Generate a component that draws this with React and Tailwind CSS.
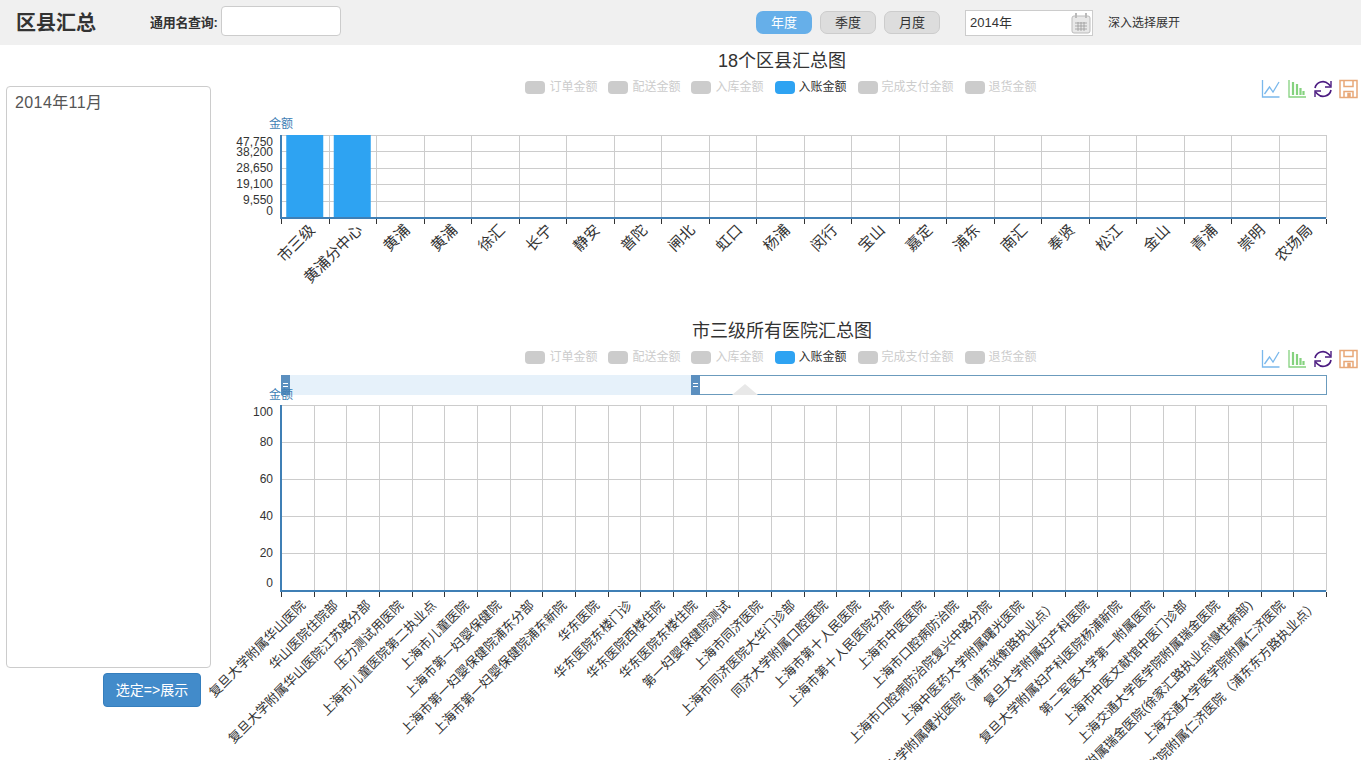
const FONT = '"Liberation Sans", "Noto Sans CJK SC", sans-serif';

const LEGEND = ["订单金额", "配送金额", "入库金额", "入账金额", "完成支付金额", "退货金额"];

const DISTRICTS = [
  "市三级", "黄浦分中心", "黄浦", "黄浦", "徐汇", "长宁", "静安", "普陀", "闸北", "虹口", "杨浦",
  "闵行", "宝山", "嘉定", "浦东", "南汇", "奉贤", "松江", "金山", "青浦", "崇明", "农场局",
];

const HOSPITALS = [
  "复旦大学附属华山医院", "华山医院住院部", "复旦大学附属华山医院江苏路分部", "压力测试用医院",
  "上海市儿童医院第二执业点", "上海市儿童医院", "上海市第一妇婴保健院", "上海市第一妇婴保健院浦东分部",
  "上海市第一妇婴保健院浦东新院", "华东医院", "华东医院东楼门诊", "华东医院西楼住院", "华东医院东楼住院",
  "第一妇婴保健院测试", "上海市同济医院", "上海市同济医院大华门诊部", "同济大学附属口腔医院",
  "上海市第十人民医院", "上海市第十人民医院分院", "上海市中医医院", "上海市口腔病防治院",
  "上海市口腔病防治院复兴中路分院", "上海中医药大学附属曙光医院", "上海中医药大学附属曙光医院（浦东张衡路执业点）",
  "复旦大学附属妇产科医院", "复旦大学附属妇产科医院杨浦新院", "第二军医大学第一附属医院",
  "上海市中医文献馆中医门诊部", "上海交通大学医学院附属瑞金医院", "上海交通大学医学院附属瑞金医院(徐家汇路执业点慢性病部)",
  "上海交通大学医学院附属仁济医院", "上海交通大学医学院附属仁济医院（浦东东方路执业点）",
];

// svg x origin sits at page x = 217
const X0 = 64;
const X1 = 1109;

function Legend() {
  return (
    <div className="flex justify-center gap-[11px] h-[14px]">
      {LEGEND.map((name) => {
        const on = name === "入账金额";
        return (
          <div key={name} className={`flex items-center gap-[4px] text-[12px] leading-[14px] ${on ? "text-[#333]" : "text-[#ccc]"}`}>
            <span className={`w-[20px] h-[13px] rounded-[4px] ${on ? "bg-[#2ea3f2]" : "bg-[#ccc]"}`} />
            {name}
          </div>
        );
      })}
    </div>
  );
}

function Toolbox() {
  return (
    <div className="absolute top-[-1px] right-[3px] flex gap-[6px]">
      <svg width="20" height="20" viewBox="0 0 20 20" fill="none" stroke="#7ab8ec" strokeWidth="1.3">
        <path d="M1.5 1v17h17" />
        <path d="M3.5 15l5-7 3.5 5 6-10" />
      </svg>
      <svg width="20" height="20" viewBox="0 0 20 20" fill="none" stroke="#85d27f" strokeWidth="1.3">
        <path d="M2 1v17h17" />
        <path d="M6 16V3M10 16V5M13.5 16V9M16.5 16v-4" strokeWidth="2.2" />
      </svg>
      <svg width="20" height="20" viewBox="0 0 20 20" fill="none" stroke="#4b1a80" strokeWidth="1.7">
        <path d="M2 9a8 8 0 0 1 13.5-4L17.5 7" />
        <path d="M18 11a8 8 0 0 1-13.5 4L2.5 13" />
        <path d="M18 2v6H12M2 18v-6H8" strokeWidth="1.4" />
      </svg>
      <svg width="19" height="20" viewBox="0 0 19 20" fill="none" stroke="#e8a878" strokeWidth="1.5">
        <path d="M1 1.5h17v17H1z" />
        <path d="M5 1.5v6h9v-6M5 18.5v-6h9v6" />
        <path d="M9 14.5h2v3H9z" fill="#e8a878" />
      </svg>
    </div>
  );
}

function Ticks({ count, y }) {
  const step = (X1 - X0) / count;
  return Array.from({ length: count + 1 }, (_, i) => (
    <line key={i} x1={Math.round(X0 + i * step) + 0.5} x2={Math.round(X0 + i * step) + 0.5} y1={y} y2={y + 5} stroke="#333" />
  ));
}

function Grid({ count, ys }) {
  const step = (X1 - X0) / count;
  const top = ys[0];
  const bottom = ys[ys.length - 1];
  return (
    <g stroke="#ccc">
      {ys.map((y) => (
        <line key={y} x1={X0} x2={X1} y1={y + 0.5} y2={y + 0.5} />
      ))}
      {Array.from({ length: count + 1 }, (_, i) => (
        <line key={i} x1={Math.round(X0 + i * step) + 0.5} x2={Math.round(X0 + i * step) + 0.5} y1={top} y2={bottom} />
      ))}
    </g>
  );
}

function Labels({ names, y, size, dx }) {
  const step = (X1 - X0) / names.length;
  return names.map((name, i) => {
    const x = X0 + step * (i + 0.5) + dx;
    return (
      <text key={i} x={x} y={y} fontSize={size} fill="#333" textAnchor="end" transform={`rotate(-45 ${x} ${y})`}>
        {name}
      </text>
    );
  });
}

function YLabels({ items }) {
  return items.map(([label, y]) => (
    <text key={label} x={56} y={y} fontSize="12" fill="#333" textAnchor="end" dominantBaseline="middle">
      {label}
    </text>
  ));
}

function DistrictChart() {
  const step = (X1 - X0) / DISTRICTS.length;
  return (
    <svg width="1144" height="200" style={{ fontFamily: FONT }} className="block mt-[6px] overflow-visible">
      <text x={64} y={28} fontSize="12" fill="#3f7fb5" textAnchor="middle">金额</text>
      <Grid count={22} ys={[35, 51, 68, 84, 101, 118]} />
      <rect x={X0 + step * 0.5 - 18.5} y="35" width="37" height="83" fill="#2ea3f2" />
      <rect x={X0 + step * 1.5 - 18.5} y="35" width="37" height="83" fill="#2ea3f2" />
      <line x1={X0} x2={X0} y1="35" y2="119" stroke="#3f7fb5" strokeWidth="2" />
      <line x1={X0 - 1} x2={X1} y1="118" y2="118" stroke="#3f7fb5" strokeWidth="2" />
      <Ticks count={22} y={119} />
      <YLabels items={[["47,750", 43], ["38,200", 53], ["28,650", 69], ["19,100", 85], ["9,550", 101], ["0", 112]]} />
      <Labels names={DISTRICTS} y={131} size={15} dx={11} />
    </svg>
  );
}

function HospitalChart() {
  return (
    <svg width="1144" height="388" style={{ fontFamily: FONT }} className="block mt-[8px] overflow-visible">
      {/* dataZoom slider */}
      <rect x={64.5} y="3.5" width="1045" height="19" fill="#fff" stroke="#6b9bbd" />
      <path d="M515 23l13-11 13 11z" fill="#e8e8e8" />
      <rect x={64} y="3" width="410" height="20" fill="#e6f1fa" />
      <rect x={64} y="3" width="9" height="20" fill="#5b8fbf" />
      <rect x={474} y="3" width="9" height="20" fill="#5b8fbf" />
      <path d="M66 11.5h5M66 14.5h5M476 11.5h5M476 14.5h5" stroke="#fff" />
      <text x={64} y={27} fontSize="12" fill="#3f7fb5" textAnchor="middle">金额</text>
      <Grid count={32} ys={[33, 70, 107, 144, 181, 219]} />
      <line x1={X0} x2={X0} y1="33" y2="220" stroke="#3f7fb5" strokeWidth="2" />
      <line x1={X0 - 1} x2={X1} y1="219" y2="219" stroke="#3f7fb5" strokeWidth="2" />
      <Ticks count={32} y={220} />
      <YLabels items={[["100", 41], ["80", 71], ["60", 108], ["40", 145], ["20", 182], ["0", 212]]} />
      <Labels names={HOSPITALS} y={234} size={13} dx={9} />
    </svg>
  );
}

export default function App() {
  return (
    <div className="h-[760px] overflow-hidden bg-white text-[#333]" style={{ fontFamily: FONT }}>
      {/* Header */}
      <div className="h-[45px] bg-[#f0f0f0] flex items-center">
        <h1 className="ml-[16px] w-[134px] text-[20px] font-bold text-[#333]">区县汇总</h1>
        <label className="w-[71px] text-[13px] font-bold tracking-[-0.3px] text-[#333]">通用名查询:</label>
        <input className="w-[120px] h-[30px] mb-[3px] bg-white border border-[#ccc] rounded-[4px]" />
        <div className="ml-[415px] flex gap-[8px]">
          <button className="w-[56px] h-[23px] rounded-[7px] bg-[#66afe9] text-white text-[13px]">年度</button>
          <button className="w-[56px] h-[23px] rounded-[7px] bg-[#ddd] border border-[#ccc] text-[13px]">季度</button>
          <button className="w-[56px] h-[23px] rounded-[7px] bg-[#ddd] border border-[#ccc] text-[13px]">月度</button>
        </div>
        <div className="ml-[25px] w-[128px] h-[26px] bg-white border border-[#ccc] flex items-center justify-between pl-[4px] pr-[1px] text-[13px]">
          2014年
          <svg width="20" height="22" viewBox="0 0 20 22" fill="none" stroke="#bbb">
            <rect x="1" y="4" width="18" height="17" rx="2" fill="#e8e8e8" />
            <path d="M5 1v5M15 1v5" strokeWidth="2" />
            <path d="M4 11h12M4 14h12M4 17h12M7 10v9M10 10v9M13 10v9" strokeWidth="0.8" stroke="#999" />
          </svg>
        </div>
        <span className="ml-[15px] text-[12px] text-[#333]">深入选择展开</span>
      </div>

      <div className="flex">
        {/* Left list */}
        <div className="w-[217px] shrink-0 pl-[6px] pr-[6px] pt-[41px]">
          <div className="h-[582px] border border-[#ccc] rounded-[4px] px-[8px] py-[5px] text-[16px] leading-[22px] tracking-[0.4px] text-[#555]">
            2014年11月
          </div>
          <div className="flex justify-end pr-[4px] mt-[5px]">
            <button className="w-[98px] h-[34px] mr-[6px] rounded-[4px] bg-[#428bca] border border-[#357ebd] text-white text-[14px]">选定=&gt;展示</button>
          </div>
        </div>

        {/* Charts */}
        <div className="flex-1 min-w-0">
          <div className="h-[270px]">
            <h2 className="h-[35px] pt-[4px] text-center text-[18px] leading-[24px] pr-[14px] text-[#333]">18个区县汇总图</h2>
            <div className="relative pr-[16px]">
              <Legend />
              <Toolbox />
            </div>
            <DistrictChart />
          </div>
          <div>
            <h2 className="h-[35px] pt-[4px] text-center text-[18px] leading-[24px] pr-[14px] text-[#333]">市三级所有医院汇总图</h2>
            <div className="relative pr-[16px]">
              <Legend />
              <Toolbox />
            </div>
            <HospitalChart />
          </div>
        </div>
      </div>
    </div>
  );
}
